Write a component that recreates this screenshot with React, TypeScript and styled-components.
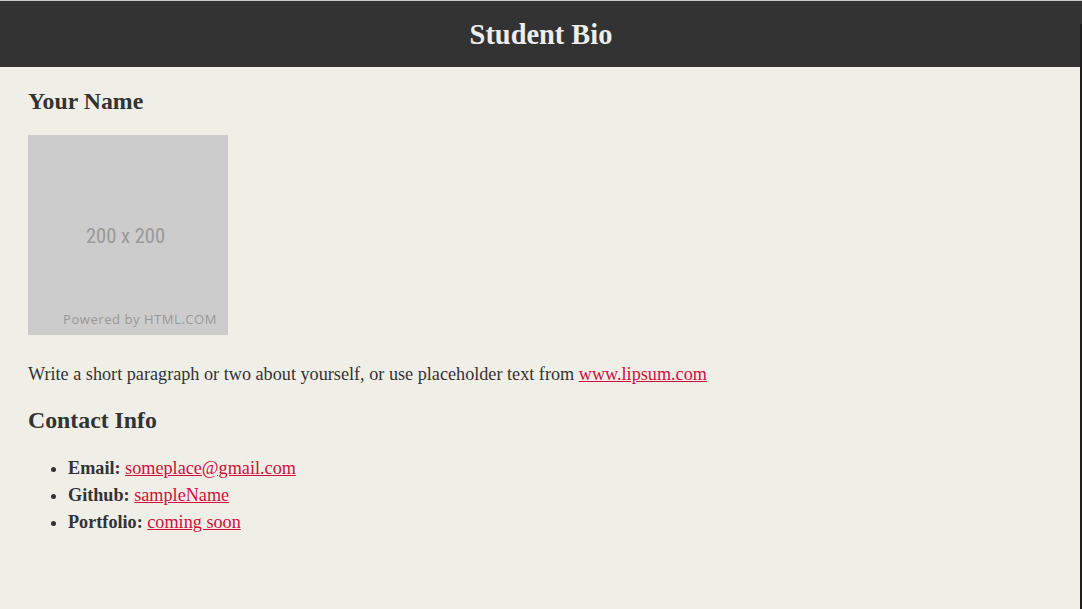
import * as React from 'react';
import styled, { createGlobalStyle } from 'styled-components';

const GlobalStyle = createGlobalStyle`
  html, body {
    margin: 0;
    padding: 0;
    background: #efefe8;
  }
  body {
    font-family: "Liberation Serif", "Times New Roman", serif;
    font-size: 18.2px;
    line-height: 1.5;
    color: #333;
  }
`;

const Page = styled.div`
  min-height: 609px;
  border-top: 1px solid #c8c8c8;
  box-sizing: border-box;
`;

const Header = styled.header`
  background: #333;
  height: 66px;
  display: flex;
  align-items: center;
  justify-content: center;
`;

const Title = styled.h1`
  margin: 2px 0 0;
  font-size: 28.4px;
  font-weight: bold;
  color: #eee;
`;

const Main = styled.main`
  padding: 17px 28px 28px;
`;

const Heading = styled.h2<{ $gap: number }>`
  margin: 0 0 ${(p) => p.$gap}px;
  font-size: 23.8px;
  font-weight: bold;
  line-height: 1.5;
`;

const Placeholder = styled.div`
  position: relative;
  width: 200px;
  height: 200px;
  background: #ccc;
  color: #999;
  display: flex;
  align-items: center;
  justify-content: center;
  font-family: "Liberation Sans Narrow", "Roboto Condensed", Roboto, sans-serif;
  font-size: 20.5px;
`;

const Size = styled.span`
  margin-left: -5px;
  margin-top: 4px;
`;

const Powered = styled.span`
  position: absolute;
  right: 11px;
  bottom: 5px;
  font-family: "Open Sans", "Noto Sans", sans-serif;
  font-size: 13px;
  letter-spacing: 0.55px;
  color: #999;
`;

const Paragraph = styled.p`
  margin: 26px 0 15px;
`;

const Link = styled.a`
  color: #d0103a;
  text-decoration: underline;
`;

const List = styled.ul`
  margin: 0;
  padding-left: 40px;
`;

const Item = styled.li`
  line-height: 27px;
`;

const EdgeStrip = styled.div`
  position: fixed;
  top: 24px;
  right: 0;
  bottom: 0;
  width: 2px;
  background: #1e1e1e;
`;

const contacts = [
  { label: 'Email:', text: 'someplace@gmail.com' },
  { label: 'Github:', text: 'sampleName' },
  { label: 'Portfolio:', text: 'coming soon' },
];

export default function App() {
  return (
    <Page>
      <GlobalStyle />
      <Header>
        <Title>Student Bio</Title>
      </Header>
      <Main>
        <Heading $gap={15}>Your Name</Heading>
        <Placeholder>
          <Size>200 x 200</Size>
          <Powered>Powered by HTML.COM</Powered>
        </Placeholder>
        <Paragraph>
          Write a short paragraph or two about yourself, or use placeholder text from{' '}
          <Link href="#">www.lipsum.com</Link>
        </Paragraph>
        <Heading $gap={16}>Contact Info</Heading>
        <List>
          {contacts.map((c) => (
            <Item key={c.label}>
              <strong>{c.label}</strong> <Link href="#">{c.text}</Link>
            </Item>
          ))}
        </List>
      </Main>
      <EdgeStrip />
    </Page>
  );
}
